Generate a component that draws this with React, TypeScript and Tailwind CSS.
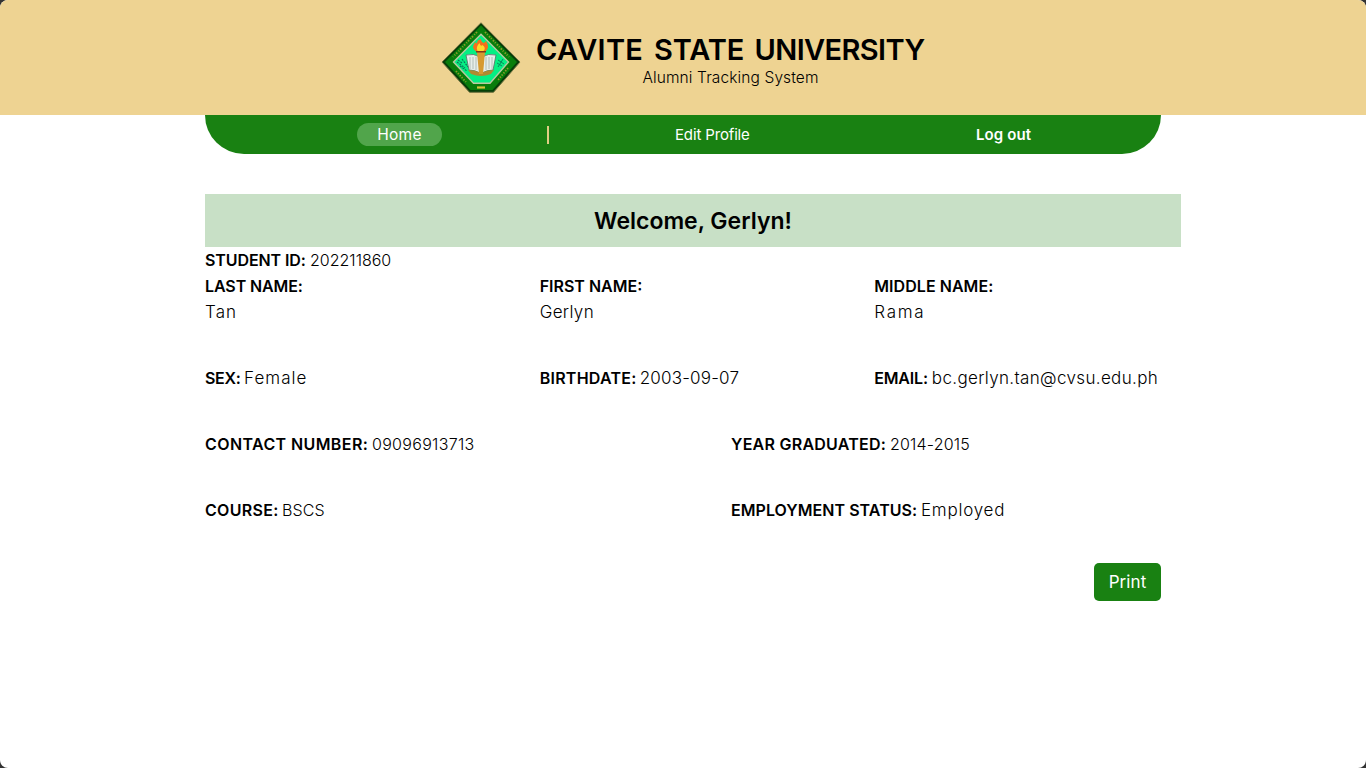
function Seal() {
  return (
    <svg className="block h-[72px] w-[80px] shrink-0" viewBox="0 0 80 72">
      <path d="M40 .8 79 40 52.5 70.3H28.5L1 40Z" fill="#063f08" stroke="#6f7040" strokeWidth="1" />
      <path d="M40 3.5 76 40 51.5 68H29.5L4 40Z" fill="#087d0b" />
      <path d="M40 12.2 67.5 40 49 61.2H32.5L12.5 40Z" fill="#05ef83" stroke="#b9c8a0" strokeWidth="1.4" />
      <path d="M44 11 68 36M36 11 12 36" stroke="#8f9a2c" strokeWidth="1.8" strokeDasharray="1.6 1.3 1 1.8" fill="none" transform="translate(0 -1)" />
      <path d="m15 49 10 11M67 46 57 58" stroke="#8f9a2c" strokeWidth="1.8" strokeDasharray="1.4 1.4" />
      <path d="M36 65.5h8" stroke="#d6c43b" strokeWidth="2.2" />
      <path d="m17 38 4 3m-5-1 8 6m-3-9 6 8m-8-1 7 5" stroke="#08735a" strokeWidth="1.1" strokeDasharray="2 1" />
      <path d="m57 38 6 4m-1-5-5 8m-1-4 5 3" stroke="#07885c" strokeWidth="1" />
      <path d="M25 33q8-2 14 2v16q-5-3-11-3ZM55 33q-8-2-14 2v16q5-3 11-3Z" fill="#e7eeea" stroke="#596c65" strokeWidth=".8" />
      <path d="M29 35v12m3-12v12m3-12v13M45 35v13m3-13v12m3-12v12" stroke="#a5b0ab" strokeWidth=".8" />
      <path d="M27 48q7 0 13 3 6-3 13-3l-3 4q-10 4-20 0Z" fill="#b08a30" />
      <path d="M36 30h8l-2 22h-4Z" fill="#d69a31" />
      <path d="M35 29.500h10" stroke="#7e371b" strokeWidth="2" />
      <path d="M34.500 29q-5-4 0-9 .5 2 1.500 1 0-3 4-4 0 3 3 4l2-2q4 6 0 10Z" fill="#f4701e" />
      <path d="M36.500 29q-2-4 2-8 1 4 3 2 4 3 1 6Z" fill="#ffd92b" />
    </svg>
  );
}

type FieldProps = { label?: string; value?: string; labelClass?: string; valueClass?: string };

function Field({ label, value, labelClass = '', valueClass = '' }: FieldProps) {
  return (
    <div className="flex h-[26px] items-center whitespace-nowrap">
      {label && <span className={`shrink-0 font-semibold ${labelClass}`}>{label}</span>}
      {value && <span className={`font-light ${valueClass}`}>{value}</span>}
    </div>
  );
}

export default function App() {
  return (
    <div className="h-[768px] w-[1366px] overflow-hidden bg-[#333333]">
      <div className="h-full overflow-hidden rounded-[8px] bg-white font-['Inter',sans-serif] text-base leading-[26px] text-black">
        <header className="flex h-[115px] bg-[#eed392] pt-[22px] pl-[441px]">
          <Seal />
          <div className="ml-[15px] w-[389px] pt-[9px]">
            <h1 className="flex h-[38px] text-[29px] leading-[38px] font-semibold whitespace-nowrap">
              <span className="w-[118px] shrink-0 tracking-[0.3px]">CAVITE </span>
              <span className="w-[100.5px] shrink-0 tracking-[-0.1px]">STATE </span>
              <span className="tracking-[-0.6px]">UNIVERSITY</span>
            </h1>
            <p className="h-[18px] text-center text-[15.5px] leading-[18px] font-light tracking-[0.12px]">Alumni Tracking System</p>
          </div>
        </header>

        <nav className="ml-[205px] flex h-[39px] w-[956px] items-center rounded-b-[40px] bg-[#198112] text-[15px] leading-[23px] text-white">
          <a className="ml-[152px] flex h-[23px] w-[85px] justify-center rounded-full bg-[#51a54b] text-[15.5px] tracking-[0.3px]">Home</a>
          <span className="ml-[105px] h-[18px] w-[2px] bg-[#dfcf83]" />
          <a className="ml-[126px] w-[76px] tracking-[-0.15px] whitespace-nowrap">Edit Profile</a>
          <a className="ml-[225px] font-semibold tracking-[0.1px] whitespace-nowrap">Log out</a>
        </nav>

        <main className="ml-[205px] pt-[40px]">
          <h2 className="flex h-[53px] w-[976px] items-center justify-center bg-[#c8e0c6] text-[23px] font-semibold">
            Welcome, Gerlyn!
          </h2>
          <Field label="STUDENT ID:" value="202211860" labelClass="w-[105px] tracking-[-0.1px]" />
          <div className="grid grid-cols-[334.67px_334.67px_300px]">
            <div>
              <Field label="LAST NAME:" labelClass="tracking-[-0.1px]" />
              <Field value="Tan" valueClass="text-[17px] tracking-[1.1px]" />
            </div>
            <div>
              <Field label="FIRST NAME:" />
              <Field value="Gerlyn" valueClass="text-[17px] tracking-[0.35px]" />
            </div>
            <div>
              <Field label="MIDDLE NAME:" labelClass="tracking-[0.05px]" />
              <Field value="Rama" valueClass="text-[17px] tracking-[1.7px]" />
            </div>
          </div>
          <div className="mt-[40px] grid grid-cols-[334.67px_334.67px_300px]">
            <Field label="SEX:" value="Female" labelClass="w-[39px] tracking-[-0.3px]" valueClass="text-[17px] tracking-[1.05px]" />
            <Field label="BIRTHDATE:" value="2003-09-07" labelClass="w-[100px] tracking-[0.25px]" valueClass="text-[17px] tracking-[0.2px]" />
            <Field label="EMAIL:" value="bc.gerlyn.tan@cvsu.edu.ph" labelClass="w-[57.5px] tracking-[-0.2px]" valueClass="text-[17px] tracking-[0.35px]" />
          </div>
          <div className="mt-[40px] grid grid-cols-[526px_430px]">
            <Field label="CONTACT NUMBER:" value="09096913713" labelClass="w-[167px] tracking-[0.4px]" valueClass="tracking-[0.3px]" />
            <Field label="YEAR GRADUATED:" value="2014-2015" labelClass="w-[159px] tracking-[0.25px]" valueClass="tracking-[0.2px]" />
          </div>
          <div className="mt-[40px] grid grid-cols-[526px_430px]">
            <Field label="COURSE:" value="BSCS" labelClass="w-[77px] tracking-[0.3px]" valueClass="tracking-[0.15px]" />
            <Field label="EMPLOYMENT STATUS:" value="Employed" labelClass="w-[190px] tracking-[0.05px]" valueClass="text-[17px] tracking-[0.75px]" />
          </div>
          <div className="mt-[40px] flex w-[956px] justify-end">
            <button className="h-[38px] w-[67px] rounded-[5px] bg-[#198112] text-[17px] tracking-[0.1px] text-white">Print</button>
          </div>
        </main>
      </div>
    </div>
  );
}
